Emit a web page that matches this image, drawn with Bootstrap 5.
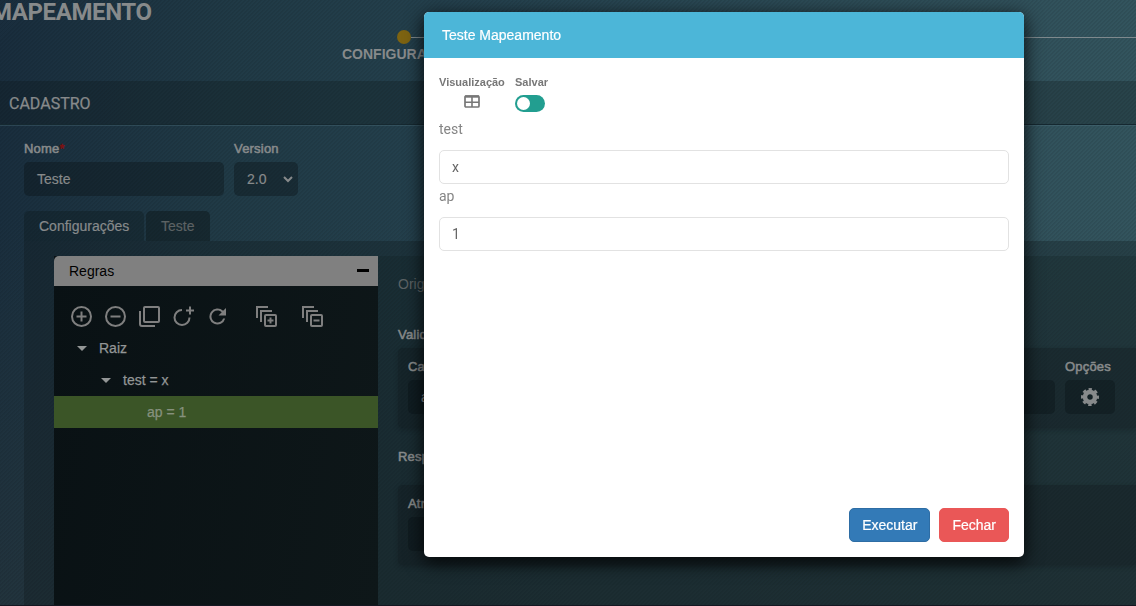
<!DOCTYPE html>
<html lang="pt-br">
<head>
<meta charset="utf-8">
<title>Mapeamento</title>
<link rel="stylesheet" href="https://cdn.jsdelivr.net/npm/bootstrap@5.3.0/dist/css/bootstrap.min.css">
<style>
body{height:606px;overflow:hidden;font:14px/20px "Liberation Sans",Arial,sans-serif;color:#878a8b;
background:repeating-linear-gradient(135deg,rgba(0,0,0,.07) 0 1.4px,transparent 1.4px 2.83px),linear-gradient(180deg,transparent 35%,rgba(40,54,58,.5) 100%),linear-gradient(96deg,#192d3d 0%,#203a46 20%,#25424f 42%,#2d4c57 70%,#34565f 100%)}
.rb{font-family:Roboto,sans-serif}
.topo{height:81px}
.titulo{font-size:24px;line-height:24px;font-weight:700;margin:0 0 0 -9px;letter-spacing:-.4px;width:350px}
.passos{padding-top:30px;margin-left:56px;width:100px}
.ponto{width:14px;height:14px;border-radius:50%;background:#7d6311}
.linha{height:1px;background:#7e898d}
.sub{height:44px;background:rgba(10,20,20,.26);border-bottom:1px solid #152830;box-shadow:0 1px rgba(90,125,138,.3);padding:2px 0 0 9px;font-size:16px;-webkit-text-stroke:.25px}
.form-area{padding:14px 0 0 24px;height:116px}
.rot{font-size:13px;line-height:20px;letter-spacing:.2px;-webkit-text-stroke:.55px}
.campo{background:rgba(8,16,18,.34);border-radius:5px;height:34px;padding:0 13px;margin-top:3px;-webkit-text-stroke:.2px}
.aba{height:30px;border-radius:5px 5px 0 0;background:rgba(12,22,25,.48);padding:0 15px;-webkit-text-stroke:.2px}
.aba.ativa{background:rgba(12,22,25,.34)}
.painel{margin-left:24px;padding:15px 0 0 30px;height:364px;background:rgba(15,25,28,.32)}
.regras{width:324px;background:linear-gradient(100deg,#091114,#0e1719);height:349px}
.regras-cab{height:30px;background:#808080;border-radius:5px 0 0 0;padding:0 9px 0 15px;color:#000}
.barra{height:46px;padding:19px 0 0 16px;color:#7f7f7f}
.barra svg{display:block;width:24px;height:24px;margin-right:10px}
.no{height:32px;color:#939696;-webkit-text-stroke:.25px}
.no svg{width:10px;height:5px;margin-right:12px}
.no.sel{background:#3b5527;color:#86917e}
.det{background:rgba(15,26,29,.22);padding:18px 0 0 20px;height:349px;min-width:0}
.caixa{background:rgba(10,17,19,.26);box-shadow:0 2px 5px rgba(10,17,19,.26);border-radius:5px 0 0 5px;height:80px;padding:9px 0 0 10px}
.caixa .campo{margin-top:3px;background:rgba(5,12,13,.28)}
.rodape{height:1px;background:#151722}
.modal-dialog.teste{width:600px;max-width:none;margin:12px 0 0 424px}
.teste .modal-content{height:545px;border:0;border-radius:5px;box-shadow:0 5px 18px 1px rgba(0,0,0,.8);color:#777}
.teste .modal-header{height:46px;background:#4cb6d8;color:#fff;border:0;border-radius:5px 5px 0 0;padding:0 18px;-webkit-text-stroke:.2px}
.teste .modal-body{padding:15px}
.teste .modal-footer{border:0;padding:0 15px 15px;gap:9px}
.mini{font-size:11px;font-weight:700;line-height:18px}
.chave{width:30px;height:17px;border-radius:9px;background:#229e90;padding:2px}
.chave i{display:block;width:13px;height:13px;border-radius:50%;background:#fff}
.teste .form-control{height:34px;border:1px solid #e2e2e2;border-radius:5px;padding:0 12px;font:14px/32px Roboto,sans-serif;color:#666}
.teste .modal-body .rb{color:#858585}
.teste .btn{height:34px;margin:0;padding:0 12px;font-size:14px;line-height:32px;border-radius:5px;color:#fff;-webkit-text-stroke:.2px}
.b-exec{background:#337ab7;border-color:#2e6da4}
.b-fech{background:#ea5757;border-color:#ea5757}
</style>
</head>
<body>
<header class="topo d-flex">
  <h1 class="titulo rb">MAPEAMENTO</h1>
  <div class="passos flex-grow-1">
    <div class="d-flex align-items-center"><span class="ponto flex-shrink-0"></span><span class="linha flex-grow-1"></span></div>
    <div class="fw-bold" style="margin:0 0 0 -55px">CONFIGURAÇÃO</div>
  </div>
</header>
<div class="sub rb d-flex align-items-center">CADASTRO</div>
<section class="form-area">
  <div class="d-flex" style="gap:10px">
    <div style="width:200px"><div class="rot">Nome<span style="color:#7d1111">*</span></div><div class="campo d-flex align-items-center">Teste</div></div>
    <div style="width:64px"><div class="rot">Version</div><div class="campo d-flex align-items-center justify-content-between pe-1">2.0<svg width="12" height="8" viewBox="0 0 12 8"><path d="M2 2l4 4 4-4" fill="none" stroke="currentColor" stroke-width="2"/></svg></div></div>
  </div>
  <div class="d-flex" style="gap:2px;margin-top:15px">
    <div class="aba ativa d-flex align-items-center" style="width:120px">Configurações</div>
    <div class="aba d-flex align-items-center" style="width:64px;color:#5c6264">Teste</div>
  </div>
</section>
<main class="painel d-flex">
  <div class="regras flex-shrink-0">
    <div class="regras-cab d-flex align-items-center justify-content-between">Regras<svg width="12" height="4"><rect width="12" height="3" y="0" fill="#000"/></svg></div>
    <div class="barra d-flex">
      <svg viewBox="0 0 24 24" fill="none" stroke="currentColor" stroke-width="2"><circle cx="11.500" cy="11.500" r="9.500"/><path d="M11.500 6.500v10M6.500 11.500h10"/></svg>
      <svg viewBox="0 0 24 24" fill="none" stroke="currentColor" stroke-width="2"><circle cx="11.500" cy="11.500" r="9.500"/><path d="M6.500 11.500h10"/></svg>
      <svg viewBox="0 0 24 24" fill="none" stroke="currentColor" stroke-width="2"><rect x="6" y="2" width="15" height="15" rx="1"/><path d="M2 6v13q0 2 2 2h13"/></svg>
      <svg viewBox="0 0 24 24" fill="none" stroke="currentColor" stroke-width="2"><path d="M10 5A7.500 7.500 0 1 0 17.500 12.500M18 1.500v8M14 5.500h8"/></svg>
      <svg viewBox="0 0 24 24" fill="currentColor"><path d="M17.100 5.850A8 8 0 1 0 19.200 13.500h-2.100A6 6 0 1 1 11.500 5.500c1.660 0 3.140.69 4.220 1.780L12.500 10.500h7.500V3z"/></svg>
      <svg style="margin-left:15px" viewBox="0 0 24 24" fill="none" stroke="currentColor" stroke-width="2"><path d="M2 13V2H13M6 17V6H17"/><rect x="10" y="10" width="11" height="11" rx="1"/><path d="M15.500 12.500v6M12.500 15.500h6"/></svg>
      <svg style="margin-left:12px" viewBox="0 0 24 24" fill="none" stroke="currentColor" stroke-width="2"><path d="M2 13V2H13M6 17V6H17"/><rect x="10" y="10" width="11" height="11" rx="1"/><path d="M12.500 15.500h6"/></svg>
    </div>
    <div class="no d-flex align-items-center" style="padding-left:23px"><svg viewBox="0 0 10 5"><path d="M0 0h10L5 5z" fill="currentColor"/></svg>Raiz</div>
    <div class="no d-flex align-items-center" style="padding-left:47px"><svg viewBox="0 0 10 5"><path d="M0 0h10L5 5z" fill="currentColor"/></svg>test = x</div>
    <div class="no sel d-flex align-items-center" style="padding-left:93px">ap = 1</div>
  </div>
  <div class="det flex-grow-1">
    <div style="color:#5c6264">Origem</div>
    <div class="rot" style="margin:31px 0 3px">Validações</div>
    <div class="caixa d-flex" style="gap:10px">
      <div style="width:647px"><div class="rot">Campo</div><div class="campo d-flex align-items-center">ap</div></div>
      <div style="width:50px"><div class="rot">Opções</div><div class="campo d-flex align-items-center justify-content-center p-0"><svg width="18" height="18" viewBox="0 0 18 18"><circle cx="9" cy="9" r="5" fill="none" stroke="currentColor" stroke-width="4.500"/><circle cx="9" cy="9" r="7.800" fill="none" stroke="currentColor" stroke-width="2.400" stroke-dasharray="3.400 2.726" stroke-dashoffset="1.700"/></svg></div></div>
    </div>
    <div class="rot" style="margin:19px 0 18px">Respostas</div>
    <div class="caixa"><div style="width:500px"><div class="rot">Atributo</div><div class="campo"></div></div></div>
  </div>
</main>
<div class="rodape"></div>

<div class="modal d-block" tabindex="-1">
  <div class="modal-dialog teste">
    <div class="modal-content">
      <div class="modal-header">Teste Mapeamento</div>
      <div class="modal-body">
        <div class="d-flex" style="gap:10px;height:46px">
          <div style="width:66px"><div class="mini">Visualização</div><svg class="d-block" style="margin:4px 0 0 25px" width="16" height="13" viewBox="0 0 16 13"><rect x="1" y="1" width="14" height="11" rx="1" fill="none" stroke="#777" stroke-width="1.700"/><path d="M1 1.500h14" stroke="#777" stroke-width="2.400"/><path d="M8 2v10M1 7.200h14" stroke="#777" stroke-width="1.600"/></svg></div>
          <div><div class="mini">Salvar</div><div class="chave mt-1"><i></i></div></div>
        </div>
        <div class="rb" style="height:31px">test</div>
        <input class="form-control" value="x">
        <div class="rb" style="height:33px;padding-top:2px">ap</div>
        <input class="form-control" value="1">
      </div>
      <div class="modal-footer"><button class="btn b-exec">Executar</button><button class="btn b-fech">Fechar</button></div>
    </div>
  </div>
</div>
<script src="https://cdn.jsdelivr.net/npm/bootstrap@5.3.0/dist/js/bootstrap.bundle.min.js"></script>
</body>
</html>
